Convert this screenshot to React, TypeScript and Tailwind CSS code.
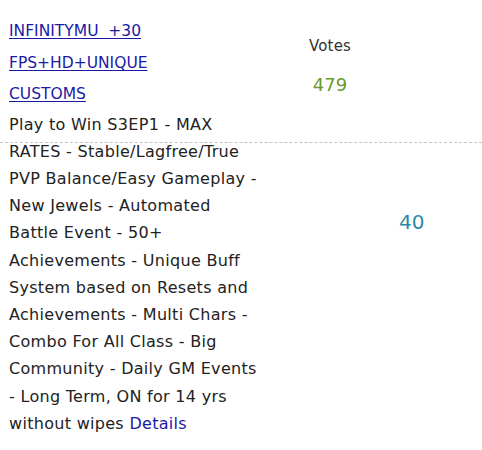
import React from 'react';

const lines = [
    'Play to Win S3EP1 - MAX',
    'RATES - Stable/Lagfree/True',
    'PVP Balance/Easy Gameplay -',
    'New Jewels - Automated',
    'Battle Event - 50+',
    'Achievements - Unique Buff',
    'System based on Resets and',
    'Achievements - Multi Chars -',
    'Combo For All Class - Big',
    'Community - Daily GM Events',
    '- Long Term, ON for 14 yrs',
];

const App: React.FC = () => {
    return (
        <div className="relative min-h-[450px] w-[482px] bg-white text-[#222] font-['DejaVu_Sans',sans-serif]">
            {/* row divider */}
            <div className="absolute left-0 right-0 top-[142px] border-t border-dashed border-[#c4c4c4]" />

            <div className="flex">
                <div className="w-[262px] pl-[9px] pt-[16px]">
                    <a href="#" className="block text-[15.5px] leading-[31.5px] text-[#1a1aa6] underline underline-offset-2">
                        INFINITYMU&nbsp; +30<br />FPS+HD+UNIQUE<br />CUSTOMS
                    </a>
                    <p className="text-[16px] leading-[27.2px] tracking-[0.3px] whitespace-nowrap">
                        {lines.map((l) => (
                            <span key={l} className="block">{l}</span>
                        ))}
                        <span className="block">
                            without wipes <a href="#" className="text-[#1a1aa6]">Details</a>
                        </span>
                    </p>
                </div>

                <div className="flex-1 flex flex-col">
                    <div className="w-[136px] pt-[35px] flex flex-col items-center">
                        <span className="text-[15px] leading-[22px] tracking-[0.2px] text-[#333]">Votes</span>
                        <span className="mt-[16px] text-[18px] leading-[24px] text-[#6b9a2c]">479</span>
                    </div>
                    <div className="pl-[137px] pt-[112px]">
                        <span className="text-[20px] leading-[26px] text-[#2b8aa8]">40</span>
                    </div>
                </div>
            </div>
        </div>
    );
};

export default App;
